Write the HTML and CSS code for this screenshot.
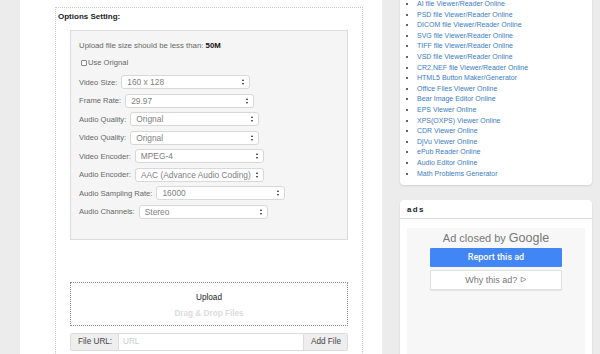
FILE: index.html
```html
<!DOCTYPE html>
<html lang="en">

<head>
  <meta charset="UTF-8">
  <meta name="viewport" content="width=device-width, initial-scale=1">
  <title>Video Converter</title>
  <link rel="stylesheet" href="styles.css">
</head>

<body>
  <div class="page">
    <!-- main column -->
    <div class="main">
      <div class="options">
        <h3>Options Setting:</h3>
        <div class="settings">
          <p class="limit">Upload file size should be less than: <b>50M</b></p>
          <label class="check"><span class="box"></span>Use Orignal</label>

          <div class="row"><span>Video Size:</span><div class="select">160 x 128<i></i></div></div>
          <div class="row"><span>Frame Rate:</span><div class="select">29.97<i></i></div></div>
          <div class="row"><span>Audio Quality:</span><div class="select">Orignal<i></i></div></div>
          <div class="row"><span>Video Quality:</span><div class="select">Orignal<i></i></div></div>
          <div class="row"><span>Video Encoder:</span><div class="select">MPEG-4<i></i></div></div>
          <div class="row"><span>Audio Encoder:</span><div class="select">AAC (Advance Audio Coding)<i></i></div></div>
          <div class="row"><span>Audio Sampling Rate:</span><div class="select">16000<i></i></div></div>
          <div class="row"><span>Audio Channels:</span><div class="select">Stereo<i></i></div></div>
        </div>

        <div class="drop">
          <div class="drop-title">Upload</div>
          <div class="drop-hint">Drag &amp; Drop Files</div>
        </div>

        <div class="url-group">
          <span class="addon">File URL:</span>
          <span class="url-input">URL</span>
          <span class="addon btn">Add File</span>
        </div>
      </div>
    </div>

    <!-- sidebar -->
    <div class="side">
      <div class="panel links">
        <ul>
          <li><a href="#">AI file Viewer/Reader Online</a></li>
          <li><a href="#">PSD file Viewer/Reader Online</a></li>
          <li><a href="#">DICOM file Viewer/Reader Online</a></li>
          <li><a href="#">SVG file Viewer/Reader Online</a></li>
          <li><a href="#">TIFF file Viewer/Reader Online</a></li>
          <li><a href="#">VSD file Viewer/Reader Online</a></li>
          <li><a href="#">CR2,NEF file Viewer/Reader Online</a></li>
          <li><a href="#">HTML5 Button Maker/Generator</a></li>
          <li><a href="#">Office Files Viewer Online</a></li>
          <li><a href="#">Bear Image Editor Online</a></li>
          <li><a href="#">EPS Viewer Online</a></li>
          <li><a href="#">XPS(OXPS) Viewer Online</a></li>
          <li><a href="#">CDR Viewer Online</a></li>
          <li><a href="#">DjVu Viewer Online</a></li>
          <li><a href="#">ePub Reader Online</a></li>
          <li><a href="#">Audio Editor Online</a></li>
          <li><a href="#">Math Problems Generator</a></li>
        </ul>
      </div>

      <div class="panel ads">
        <div class="panel-head">ads</div>
        <div class="ad-slot">
          <div class="ad-closed">Ad closed by <span class="google">Google</span></div>
          <div class="ad-report">Report this ad</div>
          <div class="ad-why">Why this ad?
            <svg width="7" height="7" viewBox="0 0 7 7"><path d="M1.2 1 L6 3.5 L1.2 6 Z" fill="none" stroke="#888" stroke-width="0.8"/></svg>
          </div>
        </div>
      </div>
    </div>
  </div>
</body>

</html>
```

FILE: styles.css
```css
* {
  margin: 0;
  padding: 0;
  box-sizing: border-box;
}

body {
  font-family: 'Liberation Sans', Arial, sans-serif;
  background: #ececec;
  color: #333;
  height: 354px;
  overflow: hidden;
}

.page {
  display: flex;
  gap: 18px;
  padding-left: 20px;
}

/* main column */
.main {
  width: 362px;
  height: 360px;
  background: #fff;
  padding: 7px 19px 0 35px;
}

.options {
  border: 1px dotted #c8c8c8;
  border-bottom: none;
  height: 100%;
  padding: 3px 14px 0 2px;
}

.options h3 {
  font-size: 8px;
  font-weight: 700;
  color: #222;
  line-height: 12px;
  margin-bottom: 7px;
}

.settings {
  margin-left: 12px;
  height: 210px;
  background: #f5f5f5;
  border: 1px solid #dcdcdc;
  padding: 9px 0 0 8px;
  font-size: 7.6px;
  color: #666;
}

.limit {
  font-size: 7.8px;
  line-height: 12px;
  margin-bottom: 5px;
}

.limit b {
  color: #111;
}

.check {
  display: flex;
  align-items: center;
  gap: 1px;
  margin-left: 2px;
  height: 11px;
  margin-bottom: 7px;
}

.check .box {
  width: 6px;
  height: 6px;
  border: 1px solid #888;
  border-radius: 1px;
  background: #fff;
}

.row {
  display: flex;
  align-items: center;
  gap: 4px;
  height: 14px;
  margin-bottom: 4.5px;
}

.select {
  position: relative;
  width: 129px;
  height: 14px;
  line-height: 12px;
  background: #fff;
  border: 1px solid #d8d8d8;
  border-radius: 3px;
  padding-left: 5px;
  color: #808080;
  font-size: 8.4px;
}

/* double arrow of the select */
.select i::before,
.select i::after {
  content: '';
  position: absolute;
  right: 5px;
  border-left: 1.5px solid transparent;
  border-right: 1.5px solid transparent;
}

.select i::before {
  top: 3px;
  border-bottom: 2.5px solid #222;
}

.select i::after {
  top: 7px;
  border-top: 2.5px solid #222;
}

.drop {
  margin: 42px 0 0 12px;
  height: 44px;
  border: 1px dotted #8a8aa0;
  text-align: center;
  padding-top: 9px;
}

.drop-title {
  font-size: 8.2px;
  color: #222;
  line-height: 12px;
  margin-bottom: 4px;
}

.drop-hint {
  font-size: 8.2px;
  font-weight: 700;
  color: #dcdcdc;
  line-height: 12px;
}

.url-group {
  display: flex;
  margin: 7px 0 0 12px;
  height: 18px;
  font-size: 8.2px;
  line-height: 16px;
  white-space: nowrap;
}

.addon {
  flex: none;
  background: #eee;
  border: 1px solid #dcdcdc;
  color: #444;
  padding-left: 7px;
  border-radius: 2px 0 0 2px;
}

.addon:first-child {
  width: 49px;
}

.addon.btn {
  border-radius: 0 2px 2px 0;
  width: 45px;
}

.url-input {
  flex: 1;
  background: #fff;
  border-top: 1px solid #dcdcdc;
  border-bottom: 1px solid #dcdcdc;
  color: #ccc;
  padding-left: 4px;
}

/* sidebar */
.side {
  width: 192px;
}

.panel {
  background: #fff;
  border-radius: 0 0 4px 4px;
  box-shadow: 0 1px 2px rgba(0, 0, 0, 0.12);
}

.links {
  height: 186px;
}

.links ul {
  padding: 0 0 0 17px;
  margin-top: -1px;
  font-size: 7px;
  line-height: 10.6px;
  color: #333;
}

.links a {
  color: #3b7dc4;
  text-decoration: none;
}

.ads {
  margin-top: 15px;
  border-radius: 4px 4px 0 0;
  height: 200px;
}

.panel-head {
  height: 19px;
  line-height: 19px;
  padding-left: 7px;
  font-size: 8px;
  font-weight: 700;
  letter-spacing: 1.3px;
  color: #222;
  border-bottom: 1px solid #ddd;
}

.ad-slot {
  margin: 9px 7px 0;
  height: 140px;
  background: #f7f7f7;
  padding-top: 2px;
  text-align: center;
}

.ad-closed {
  font-size: 11px;
  color: #777;
  line-height: 16px;
  margin-bottom: 2px;
}

.google {
  font-size: 12.5px;
}

.ad-report,
.ad-why {
  width: 132px;
  margin: 0 auto;
  height: 19px;
  line-height: 19px;
  font-size: 9px;
}

.ad-report {
  font-family: Roboto, 'Liberation Sans', sans-serif;
  font-weight: 500;
  background: #4285f4;
  color: #fff;
  border-radius: 1px;
}

.ad-why {
  margin-top: 3px;
  height: 20px;
  background: #fff;
  color: #777;
  border: 1px solid #e0e0e0;
  border-radius: 1px;
  box-shadow: 0 1px 1px rgba(0, 0, 0, 0.08);
}
```
